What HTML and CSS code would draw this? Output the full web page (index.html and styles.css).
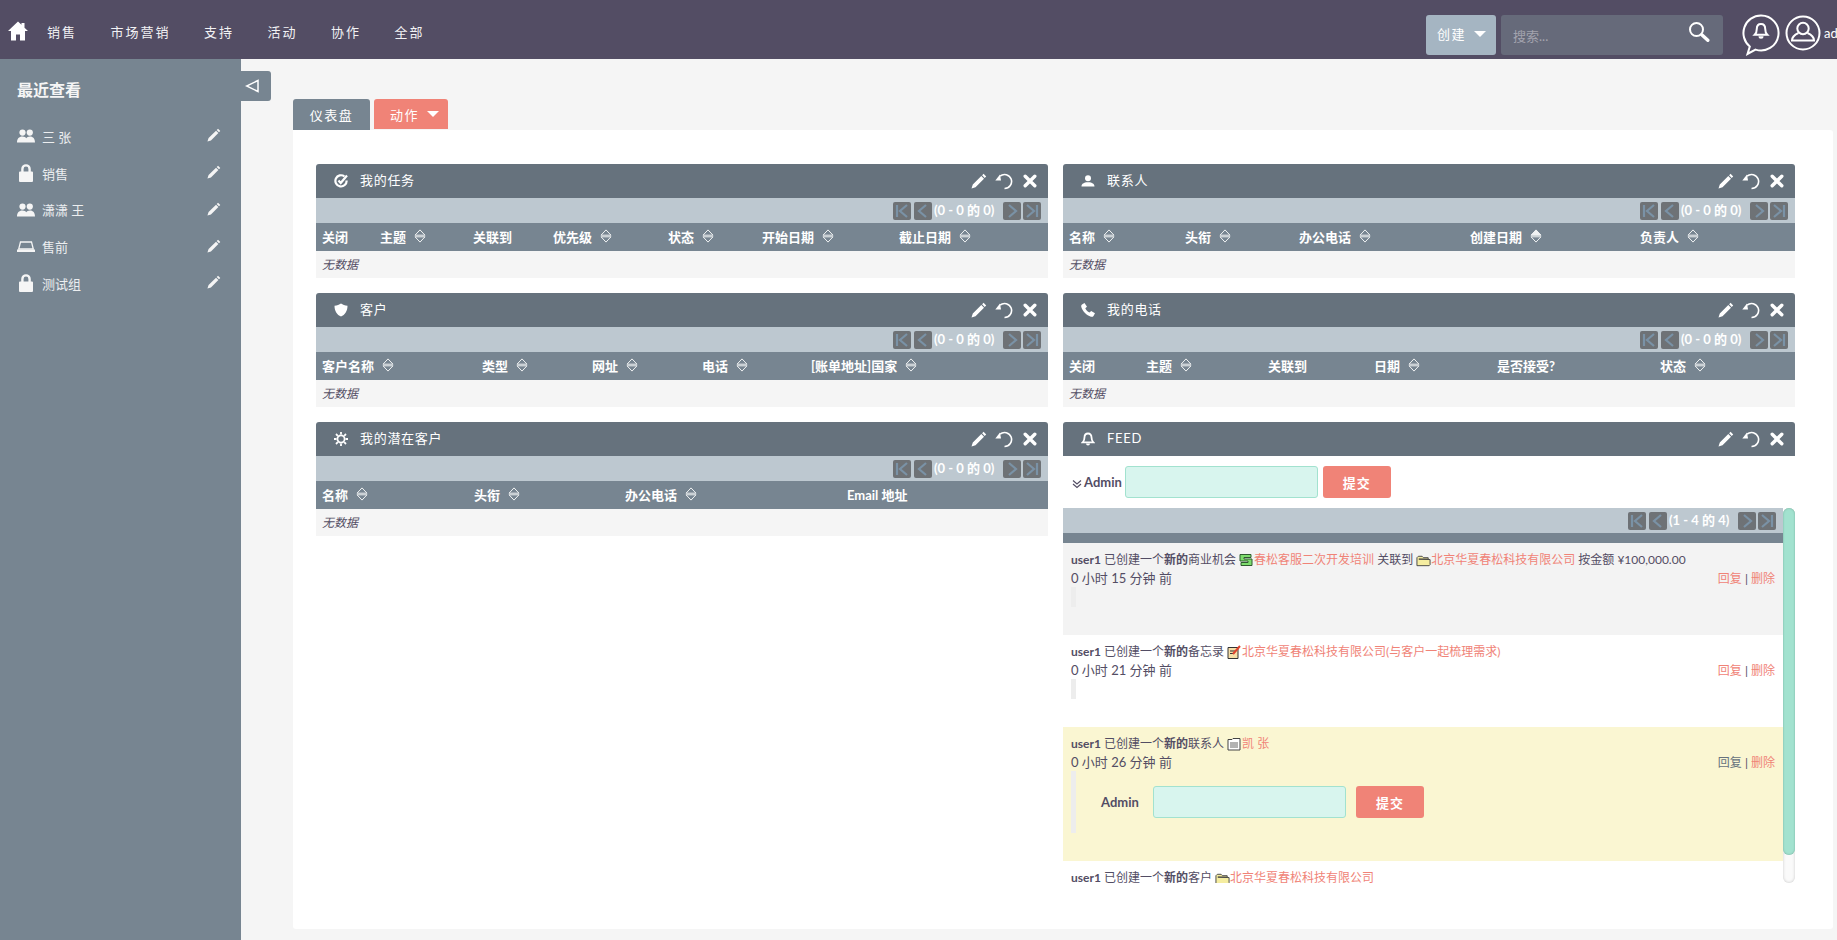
FILE: index.html
```html
<!DOCTYPE html>
<html lang="zh">
<head>
<meta charset="utf-8">
<title>仪表盘</title>
<link rel="stylesheet" href="styles.css">
</head>
<body>
<svg class="sprite" xmlns="http://www.w3.org/2000/svg">
  <symbol id="i-pencil" viewBox="0 0 16 16"><path fill="currentColor" d="M12.600 0.800l2.600 2.600-1.500 1.500-2.600-2.600zM10.300 3l2.700 2.700-8.500 8.500-4 1.300 1.300-4z"/></symbol>
  <symbol id="i-undo" viewBox="0 0 18 18"><path fill="none" stroke="currentColor" stroke-width="1.600" d="M5 4.200A7 7 0 1 1 9.500 16.500"/><path fill="currentColor" d="M0.300 8.600l5.700-0.200-1-6z"/></symbol>
  <symbol id="i-close" viewBox="0 0 14 14"><path fill="none" stroke="currentColor" stroke-width="3.400" stroke-linecap="round" d="M2.200 2.200l9.600 9.600M11.800 2.200l-9.600 9.600"/></symbol>
  <symbol id="i-sort" viewBox="0 0 12 14"><path fill="none" stroke="currentColor" d="M1 6.200L6 .9l5 5.300zM1 7.800l5 5.300 5-5.300z"/></symbol>
  <symbol id="i-sort-up" viewBox="0 0 12 14"><path fill="currentColor" stroke="currentColor" d="M1 6.200L6 .9l5 5.300z"/><path fill="none" stroke="currentColor" d="M1 7.800l5 5.300 5-5.300z"/></symbol>
  <symbol id="i-first" viewBox="0 0 18 18"><path fill="none" stroke="currentColor" stroke-width="2.200" d="M4 3v12M14 3L7 9l7 6"/></symbol>
  <symbol id="i-prev" viewBox="0 0 18 18"><path fill="none" stroke="currentColor" stroke-width="2.200" d="M12 3L5 9l7 6"/></symbol>
  <symbol id="i-next" viewBox="0 0 18 18"><path fill="none" stroke="currentColor" stroke-width="2.200" d="M6 3l7 6-7 6"/></symbol>
  <symbol id="i-last" viewBox="0 0 18 18"><path fill="none" stroke="currentColor" stroke-width="2.200" d="M14 3v12M4 3l7 6-7 6"/></symbol>
  <symbol id="i-people" viewBox="0 0 18 14"><circle cx="5.500" cy="3.600" r="3.100" fill="currentColor"/><circle cx="12.800" cy="3.600" r="3.100" fill="currentColor"/><path fill="currentColor" d="M0 13.500c0-3.800 2-6 5.400-6 2 0 3.200.7 3.900 1.800.7-1.100 1.900-1.800 3.700-1.800 3.200 0 5 2.200 5 6z"/></symbol>
  <symbol id="i-lock" viewBox="0 0 14 18"><path fill="currentColor" d="M1 7.500h1.200V5a4.800 4.800 0 0 1 9.600 0v2.500H13a1 1 0 0 1 1 1V17a1 1 0 0 1-1 1H1a1 1 0 0 1-1-1V8.500a1 1 0 0 1 1-1zm3.600 0h4.800V5a2.400 2.400 0 0 0-4.800 0z"/></symbol>
  <symbol id="i-tray" viewBox="0 0 18 11"><path fill="none" stroke="currentColor" stroke-width="1.300" d="M3.500 1h11l1.800 7H1.700z"/><path fill="currentColor" d="M0 8.500h18v2.500H0z"/></symbol>
  <symbol id="i-task" viewBox="0 0 14 14"><path fill="none" stroke="currentColor" stroke-width="2.200" d="M10.500 2.500A5.600 5.600 0 1 0 12.600 6.500"/><path fill="none" stroke="currentColor" stroke-width="2.200" d="M4.500 6.500l2.200 2.500L13 1.500"/></symbol>
  <symbol id="i-shield" viewBox="0 0 14 14"><path fill="currentColor" d="M7 0.500c1.800 1.300 3.800 2 6.500 2.200C13.500 8 11 11.800 7 13.500 3 11.800.5 8 .5 2.700 3.200 2.500 5.200 1.800 7 .5z"/></symbol>
  <symbol id="i-gear" viewBox="0 0 14 14"><circle cx="7" cy="7" r="3.600" fill="none" stroke="currentColor" stroke-width="1.800"/><path fill="none" stroke="currentColor" stroke-width="1.800" d="M7 0v2.500M7 11.500V14M0 7h2.500M11.500 7H14M2 2l1.800 1.800M10.200 10.200L12 12M12 2l-1.800 1.800M3.800 10.200L2 12"/></symbol>
  <symbol id="i-person" viewBox="0 0 14 12"><circle cx="7" cy="3.200" r="3" fill="currentColor"/><path fill="currentColor" d="M0.500 11.500c0-2.800 2.500-3.500 4.500-4.200h4c2 .7 4.500 1.400 4.500 4.200z"/></symbol>
  <symbol id="i-phone" viewBox="0 0 14 14"><path fill="currentColor" d="M1 1.500L3.500 0 6 3.700 4.300 5.300c.7 1.700 2.200 3.300 4.200 4.300l1.700-1.700L14 10.300 12.500 13c-.5.800-1.500 1-2.500.7C5.500 12.300 1.800 8.500.3 4 0 3 .3 2 1 1.500z"/></symbol>
  <symbol id="i-bell" viewBox="0 0 14 14"><path fill="none" stroke="currentColor" stroke-width="1.800" d="M7 1.500c-2.300 0-3.500 1.700-3.500 3.800 0 2.500-.7 3.900-1.800 5h10.600c-1.100-1.100-1.800-2.500-1.800-5C10.500 3.200 9.300 1.500 7 1.500z"/><path fill="currentColor" d="M5 11.500h4a2 2 0 0 1-4 0z"/></symbol>
</svg>

<header class="topnav">
  <svg class="home" viewBox="0 0 20 20"><path fill="currentColor" d="M10 0.500L0 10h3v9.500h5v-6h4v6h5V10h3l-3.500-3.300V2h-3v1.800z"/></svg>
  <nav class="menu">
    <a>销售</a><a>市场营销</a><a>支持</a><a>活动</a><a>协作</a><a>全部</a>
  </nav>
  <div class="tools">
    <button class="create">创建<span class="caret"></span></button>
    <div class="search">
      <span class="placeholder">搜索...</span>
      <svg class="search-icon" viewBox="0 0 22 22"><circle cx="8.500" cy="8.500" r="6.500" fill="none" stroke="currentColor" stroke-width="2"/><path stroke="currentColor" stroke-width="3.400" stroke-linecap="round" d="M13.800 13.800l6 5.500"/></svg>
    </div>
    <svg class="bubble" viewBox="0 0 38 42"><path fill="none" stroke="currentColor" stroke-width="2" d="M19 1.500a17.500 17.500 0 1 1-5.500 34.100L5.500 40l2.300-7.500A17.500 17.500 0 0 1 19 1.500z"/><path fill="none" stroke="currentColor" stroke-width="2" d="M19 10c-2.900 0-4.200 2.200-4.200 4.800 0 3.200-.9 4.800-2.100 6h12.600c-1.200-1.200-2.100-2.800-2.100-6 0-2.600-1.300-4.800-4.200-4.800z"/><path fill="currentColor" d="M16.500 22.200h5a2.500 2.500 0 0 1-5 0z"/></svg>
    <svg class="avatar" viewBox="0 0 36 36"><circle cx="18" cy="18" r="16.500" fill="none" stroke="currentColor" stroke-width="2"/><circle cx="18" cy="13.500" r="5.700" fill="none" stroke="currentColor" stroke-width="2"/><path fill="none" stroke="currentColor" stroke-width="2" d="M13.500 18C10 19.500 7 21.500 7 25.500h22c0-4-3-6-6.500-7.500"/></svg>
    <span class="username">admin</span>
  </div>
</header>

<div class="body">
  <aside class="sidebar">
    <h2 class="side-title">最近查看</h2>
    <ul class="recent">
      <li><svg class="r-icon r-wide"><use href="#i-people"/></svg><span>三 张</span><svg class="r-edit"><use href="#i-pencil"/></svg></li>
      <li><svg class="r-icon r-lock"><use href="#i-lock"/></svg><span>销售</span><svg class="r-edit"><use href="#i-pencil"/></svg></li>
      <li><svg class="r-icon r-wide"><use href="#i-people"/></svg><span>潇潇 王</span><svg class="r-edit"><use href="#i-pencil"/></svg></li>
      <li><svg class="r-icon r-tray"><use href="#i-tray"/></svg><span>售前</span><svg class="r-edit"><use href="#i-pencil"/></svg></li>
      <li><svg class="r-icon r-lock"><use href="#i-lock"/></svg><span>测试组</span><svg class="r-edit"><use href="#i-pencil"/></svg></li>
    </ul>
  </aside>

  <main class="main">
    <button class="collapse"><svg viewBox="0 0 14 14"><path fill="none" stroke="currentColor" stroke-width="1.500" d="M13 1.500v11L1.500 7z"/></svg></button>
    <div class="tabs">
      <a class="tab">仪表盘</a>
      <a class="tab tab-action">动作<span class="caret"></span></a>
    </div>
    <section class="panel">
      <div class="col">

        <article class="dashlet">
          <header class="d-head"><svg class="d-icon"><use href="#i-task"/></svg><h3>我的任务</h3><div class="d-actions"><svg class="a-pencil"><use href="#i-pencil"/></svg><svg class="a-undo"><use href="#i-undo"/></svg><svg class="a-close"><use href="#i-close"/></svg></div></header>
          <div class="pager"><a class="pg"><svg><use href="#i-first"/></svg></a><a class="pg"><svg><use href="#i-prev"/></svg></a><span class="pg-text">(0 - 0 的 0)</span><a class="pg"><svg><use href="#i-next"/></svg></a><a class="pg"><svg><use href="#i-last"/></svg></a></div>
          <div class="thead cols-tasks"><span>关闭</span><span>主题<svg class="sort"><use href="#i-sort"/></svg></span><span>关联到</span><span>优先级<svg class="sort"><use href="#i-sort"/></svg></span><span>状态<svg class="sort"><use href="#i-sort"/></svg></span><span>开始日期<svg class="sort"><use href="#i-sort"/></svg></span><span>截止日期<svg class="sort"><use href="#i-sort"/></svg></span></div>
          <div class="nodata">无数据</div>
        </article>

        <article class="dashlet">
          <header class="d-head"><svg class="d-icon"><use href="#i-shield"/></svg><h3>客户</h3><div class="d-actions"><svg class="a-pencil"><use href="#i-pencil"/></svg><svg class="a-undo"><use href="#i-undo"/></svg><svg class="a-close"><use href="#i-close"/></svg></div></header>
          <div class="pager"><a class="pg"><svg><use href="#i-first"/></svg></a><a class="pg"><svg><use href="#i-prev"/></svg></a><span class="pg-text">(0 - 0 的 0)</span><a class="pg"><svg><use href="#i-next"/></svg></a><a class="pg"><svg><use href="#i-last"/></svg></a></div>
          <div class="thead cols-accounts"><span>客户名称<svg class="sort"><use href="#i-sort"/></svg></span><span>类型<svg class="sort"><use href="#i-sort"/></svg></span><span>网址<svg class="sort"><use href="#i-sort"/></svg></span><span>电话<svg class="sort"><use href="#i-sort"/></svg></span><span>[账单地址]国家<svg class="sort"><use href="#i-sort"/></svg></span></div>
          <div class="nodata">无数据</div>
        </article>

        <article class="dashlet">
          <header class="d-head"><svg class="d-icon"><use href="#i-gear"/></svg><h3>我的潜在客户</h3><div class="d-actions"><svg class="a-pencil"><use href="#i-pencil"/></svg><svg class="a-undo"><use href="#i-undo"/></svg><svg class="a-close"><use href="#i-close"/></svg></div></header>
          <div class="pager"><a class="pg"><svg><use href="#i-first"/></svg></a><a class="pg"><svg><use href="#i-prev"/></svg></a><span class="pg-text">(0 - 0 的 0)</span><a class="pg"><svg><use href="#i-next"/></svg></a><a class="pg"><svg><use href="#i-last"/></svg></a></div>
          <div class="thead cols-leads"><span>名称<svg class="sort"><use href="#i-sort"/></svg></span><span>头衔<svg class="sort"><use href="#i-sort"/></svg></span><span>办公电话<svg class="sort"><use href="#i-sort"/></svg></span><span>Email 地址</span></div>
          <div class="nodata">无数据</div>
        </article>
      </div>

      <div class="col">
        <article class="dashlet">
          <header class="d-head"><svg class="d-icon"><use href="#i-person"/></svg><h3>联系人</h3><div class="d-actions"><svg class="a-pencil"><use href="#i-pencil"/></svg><svg class="a-undo"><use href="#i-undo"/></svg><svg class="a-close"><use href="#i-close"/></svg></div></header>
          <div class="pager"><a class="pg"><svg><use href="#i-first"/></svg></a><a class="pg"><svg><use href="#i-prev"/></svg></a><span class="pg-text">(0 - 0 的 0)</span><a class="pg"><svg><use href="#i-next"/></svg></a><a class="pg"><svg><use href="#i-last"/></svg></a></div>
          <div class="thead cols-contacts"><span>名称<svg class="sort"><use href="#i-sort"/></svg></span><span>头衔<svg class="sort"><use href="#i-sort"/></svg></span><span>办公电话<svg class="sort"><use href="#i-sort"/></svg></span><span>创建日期<svg class="sort"><use href="#i-sort-up"/></svg></span><span>负责人<svg class="sort"><use href="#i-sort"/></svg></span></div>
          <div class="nodata">无数据</div>
        </article>

        <article class="dashlet">
          <header class="d-head"><svg class="d-icon"><use href="#i-phone"/></svg><h3>我的电话</h3><div class="d-actions"><svg class="a-pencil"><use href="#i-pencil"/></svg><svg class="a-undo"><use href="#i-undo"/></svg><svg class="a-close"><use href="#i-close"/></svg></div></header>
          <div class="pager"><a class="pg"><svg><use href="#i-first"/></svg></a><a class="pg"><svg><use href="#i-prev"/></svg></a><span class="pg-text">(0 - 0 的 0)</span><a class="pg"><svg><use href="#i-next"/></svg></a><a class="pg"><svg><use href="#i-last"/></svg></a></div>
          <div class="thead cols-calls"><span>关闭</span><span>主题<svg class="sort"><use href="#i-sort"/></svg></span><span>关联到</span><span>日期<svg class="sort"><use href="#i-sort"/></svg></span><span>是否接受?</span><span>状态<svg class="sort"><use href="#i-sort"/></svg></span></div>
          <div class="nodata">无数据</div>
        </article>

        <article class="dashlet">
          <header class="d-head"><svg class="d-icon"><use href="#i-bell"/></svg><h3>FEED</h3><div class="d-actions"><svg class="a-pencil"><use href="#i-pencil"/></svg><svg class="a-undo"><use href="#i-undo"/></svg><svg class="a-close"><use href="#i-close"/></svg></div></header>
          <form class="post">
            <svg class="chev" viewBox="0 0 10 10"><path fill="none" stroke="currentColor" stroke-width="1.200" d="M1 1.500l4 3.500 4-3.500M1 5l4 3.500L9 5"/></svg>
            <b class="admin">Admin</b>
            <span class="field"></span>
            <button class="submit" type="button">提交</button>
          </form>
          <div class="feed">
            <div class="feed-main">
              <div class="pager"><a class="pg"><svg><use href="#i-first"/></svg></a><a class="pg"><svg><use href="#i-prev"/></svg></a><span class="pg-text">(1 - 4 的 4)</span><a class="pg"><svg><use href="#i-next"/></svg></a><a class="pg"><svg><use href="#i-last"/></svg></a></div>
              <div class="feed-strip"></div>

              <div class="entry entry-grey">
                <p class="l1"><b>user1</b> 已创建一个<b>新的</b>商业机会
                  <svg class="mini" viewBox="0 0 14 14"><path fill="#7ddc6c" stroke="#2f5a2f" d="M1 1.500h11v3H5v1.500h8v6.500H2v-3h7V8H1z"/></svg><a>春松客服二次开发培训</a> 关联到
                  <svg class="mini mini-wide" viewBox="0 0 16 13"><path fill="#f5eda0" stroke="#444" d="M1 12V3.500L2.500 2h4L8 3.500h5V5H3l12 .5V11l-1 1z"/></svg><a>北京华夏春松科技有限公司</a> 按金额 ¥100,000.00</p>
                <div class="l2"><span>0 小时 15 分钟 前</span><span class="links"><a>回复</a> | <a>删除</a></span></div>
                <div class="quote"></div>
              </div>

              <div class="entry">
                <p class="l1"><b>user1</b> 已创建一个<b>新的</b>备忘录
                  <svg class="mini" viewBox="0 0 14 14"><path fill="#f6dfa8" stroke="#333" d="M1 2.500h10v11H1z"/><path stroke="#333" d="M3 6h6M3 8.500h4"/><path stroke="#e0452f" stroke-width="2" d="M6 9l7-8"/></svg><a>北京华夏春松科技有限公司(与客户一起梳理需求)</a></p>
                <div class="l2"><span>0 小时 21 分钟 前</span><span class="links"><a>回复</a> | <a>删除</a></span></div>
                <div class="quote"></div>
              </div>

              <div class="entry entry-hover">
                <p class="l1"><b>user1</b> 已创建一个<b>新的</b>联系人
                  <svg class="mini" viewBox="0 0 14 14"><path fill="#fff" stroke="#444" d="M1 2.500h4l1-1h7v11.500H1z"/><path stroke="#666" d="M3 6h8M3 8h8M3 10h8"/></svg><a>凯 张</a></p>
                <div class="l2"><span>0 小时 26 分钟 前</span><span class="links"><a class="dim">回复</a> | <a>删除</a></span></div>
                <form class="quote quote-reply">
                  <b class="admin reply-admin">Admin</b>
                  <span class="field"></span>
                  <button class="submit submit-reply" type="button">提交</button>
                </form>
              </div>

              <div class="entry">
                <p class="l1"><b>user1</b> 已创建一个<b>新的</b>客户
                  <svg class="mini mini-wide" viewBox="0 0 16 13"><path fill="#f5eda0" stroke="#444" d="M1 12V3.500L2.500 2h4L8 3.500h5V5H3l12 .5V11l-1 1z"/></svg><a>北京华夏春松科技有限公司</a></p>
              </div>
            </div>
            <div class="scrollbar"><div class="thumb"></div></div>
          </div>
        </article>
      </div>
    </section>
  </main>
</div>
</body>
</html>
```

FILE: styles.css
```css
* { box-sizing: border-box; }
html, body { margin: 0; height: 100%; overflow: hidden; }
body {
  font-family: Lato, "Noto Sans CJK SC", sans-serif;
  font-size: 12px;
  color: #534d64;
  background: #f5f5f5;
  display: flex;
  flex-direction: column;
  width: 1837px;
  height: 940px;
}
.sprite { position: absolute; width: 0; height: 0; }
svg { display: block; flex: none; }
p, h2, h3, ul { margin: 0; padding: 0; }
button { font-family: inherit; border: 0; }

/* top bar */
.topnav {
  height: 59px;
  flex: none;
  background: #534d64;
  color: #fff;
  display: flex;
  align-items: center;
  padding-left: 8px;
  overflow: hidden;
}
.home { width: 20px; height: 20px; margin-top: 3px; }
.menu {
  display: flex;
  gap: 33.500px;
  margin-left: 19px;
  font-size: 13px;
  letter-spacing: 2px;
  color: #f2f2f4;
  margin-top: 3px;
}
.tools {
  margin-left: auto;
  display: flex;
  align-items: center;
  height: 59px;
  width: 411px;
  flex: none;
  white-space: nowrap;
}
.create {
  width: 70px;
  height: 40px;
  flex: none;
  background: #a5b5c2;
  border-radius: 3px;
  color: #fff;
  font-size: 13px;
  letter-spacing: 1.500px;
  display: flex;
  align-items: center;
  padding: 0 0 3px 11px;
  margin-top: 11px;
}
.caret {
  display: inline-block;
  flex: none;
  width: 0;
  height: 0;
  border-left: 6.500px solid transparent;
  border-right: 6.500px solid transparent;
  border-top: 6px solid #fff;
  margin-left: 8px;
}
.search {
  width: 222px;
  height: 40px;
  flex: none;
  margin-left: 5px;
  margin-top: 11px;
  background: #666a7a;
  border-radius: 3px;
  display: flex;
  align-items: center;
  justify-content: space-between;
  padding: 0 13px 0 12px;
  color: #fff;
}
.placeholder { font-size: 13px; color: #a3a3ae; }
.search-icon { width: 22px; height: 22px; margin-top: -6px; }
.bubble { width: 38px; height: 42px; margin-left: 19px; margin-top: 11px; }
.avatar { width: 36px; height: 36px; margin-left: 5px; margin-top: 7px; }
.username { margin-left: 3px; font-size: 13px; color: #fff; margin-top: 7px; }

/* layout */
.body { flex: 1; display: flex; min-height: 0; }
.sidebar {
  width: 241px;
  flex: none;
  background: #778591;
  padding: 20px 17px 0;
  color: #eceef0;
}
.side-title { font-size: 16px; font-weight: 700; line-height: 22px; color: #f5f5f5; }
.recent { list-style: none; margin-top: 17px; }
.recent li {
  height: 36.750px;
  display: flex;
  align-items: center;
  font-size: 13px;
}
.recent li span { flex: 1; margin-left: 7px; }
.r-icon { width: 18px; color: #f5f5f5; }
.r-wide { height: 14px; }
.r-lock { width: 14px; height: 18px; margin: 0 2px; }
.r-tray { height: 11px; }
.r-edit { width: 14px; height: 14px; margin-right: 3px; margin-top: -2px; color: #f5f5f5; }

.main { flex: 1; position: relative; padding: 40px 4px 11px 52px; display: flex; flex-direction: column; min-width: 0; }
.collapse {
  position: absolute;
  left: 0;
  top: 12px;
  width: 30px;
  height: 30px;
  background: #778591;
  color: #fff;
  border-radius: 0 3px 3px 0;
  padding: 0 0 0 4px;
}
.collapse svg { width: 14px; height: 14px; }
.tabs { display: flex; gap: 4px; height: 31px; flex: none; }
.tab {
  height: 31px;
  width: 77px;
  background: #778591;
  color: #fff;
  font-size: 13px;
  letter-spacing: 1.500px;
  border-radius: 3px 3px 0 0;
  display: flex;
  align-items: center;
  justify-content: center;
}
.tab-action { width: 74px; background: #f08377; height: 30px; justify-content: flex-start; padding-left: 16px; }
.panel {
  flex: 1;
  background: #fff;
  border-radius: 0 3px 3px 3px;
  padding: 34px 38px 0 23px;
  display: grid;
  grid-template-columns: 732px 732px;
  column-gap: 15px;
  min-height: 0;
}
.col { display: flex; flex-direction: column; gap: 15px; min-width: 0; }

/* dashlet */
.d-head {
  height: 34px;
  background: #66727d;
  color: #fff;
  border-radius: 3px 3px 0 0;
  display: flex;
  align-items: center;
}
.d-head h3 { font-size: 13px; font-weight: 400; letter-spacing: .7px; margin-left: 0; line-height: 30px; margin-top: -3px; }
.d-icon { width: 14px; height: 14px; margin: -1px 12px 0 18px; }
.d-actions { margin-left: auto; display: flex; align-items: center; padding-right: 11px; }
.a-pencil { width: 16px; height: 16px; }
.a-undo { width: 18px; height: 18px; margin-left: 8px; }
.a-close { width: 14px; height: 14px; margin-left: 10px; }

.pager {
  height: 25px;
  background: #bdc8d0;
  display: flex;
  align-items: center;
  justify-content: flex-end;
  padding-right: 7px;
  gap: 3px;
}
.pg {
  width: 18px;
  height: 18px;
  flex: none;
  background: #6e7276;
  border-radius: 2px;
  color: #7a92a6;
}
.pg:last-child { margin-left: -1px; }
.pg svg { width: 18px; height: 18px; }
.pg-text {
  color: #fff;
  font-weight: 700;
  font-size: 13px;
  width: 67px;
  margin-left: -1px;
  margin-right: -1px;
  padding-bottom: 2px;
  white-space: nowrap;
}
.thead {
  height: 28px;
  background: #778591;
  color: #fff;
  font-size: 13px;
  font-weight: 700;
  display: grid;
  align-items: center;
  padding: 0 0 2px 6px;
}
.thead span { display: flex; align-items: center; white-space: nowrap; }
.sort { width: 12px; height: 14px; margin-left: 8px; margin-top: 0; color: #f0f2f3; }
.cols-tasks { grid-template-columns: 58px 93px 80px 115px 94px 137px 1fr; }
.cols-accounts { grid-template-columns: 160px 110px 110px 109px 1fr; }
.cols-leads { grid-template-columns: 152px 151px 222px 1fr; }
.cols-contacts { grid-template-columns: 116px 114px 171px 170px 1fr; }
.cols-calls { grid-template-columns: 77px 122px 106px 123px 163px 1fr; }
.nodata {
  height: 27px;
  background: #f5f5f5;
  font-style: italic;
  font-size: 12px;
  line-height: 27px;
  padding-left: 6px;
}

/* feed */
.post { display: flex; align-items: center; height: 52px; padding-left: 9px; }
.chev { width: 10px; height: 10px; margin-top: 3px; }
.admin { font-size: 13px; font-weight: 700; margin-left: 2px; }
.field {
  width: 193px;
  height: 32px;
  background: #d8f5ee;
  border: 1px solid #a2e2cf;
  border-radius: 3px;
  margin-left: 3px;
}
.submit {
  width: 68px;
  height: 32px;
  background: #f08377;
  color: #fff;
  font-size: 13px;
  font-weight: 700;
  letter-spacing: 1px;
  border-radius: 3px;
  margin-left: 5px;
}
.feed { display: flex; height: 375px; overflow: hidden; }
.feed-main { flex: 1; min-width: 0; overflow: hidden; }
.feed-strip { height: 10px; background: #778591; }
.entry { padding: 8px 8px 28px; }
.entry-grey { background: #f3f3f3; }
.entry-hover { background: #faf6d2; }
.l1 { line-height: 18px; white-space: nowrap; }
.l1 b { font-weight: 700; }
.l1 a, .links a { color: #f08377; }
.mini { display: inline-block; width: 14px; height: 14px; vertical-align: -3px; margin-right: 1px; }
.mini-wide { width: 15px; height: 13px; margin-right: 0; }
.l2 { display: flex; justify-content: space-between; line-height: 19px; font-size: 13px; height: 18px; }
.links { font-size: 12px; }
.links a.dim { color: #66727d; }
.quote { width: 5px; height: 20px; background: #ededed; }
.quote-reply {
  width: 100%;
  height: 62px;
  background: transparent;
  border-left: 5px solid #ededed;
  display: flex;
  align-items: center;
  padding-left: 25px;
}
.reply-admin { margin: 0; width: 52px; }
.quote-reply .field { margin: 0; }
.submit-reply { margin-left: 10px; }
.scrollbar {
  width: 12px;
  flex: none;
  background: #fafafa;
  box-shadow: inset 0 0 3px #c8c8c8;
  border-radius: 6px;
}
.thumb {
  height: 347px;
  background: #a2e2cf;
  box-shadow: inset 0 0 2px #6fa897;
  border-radius: 6px;
}
```
